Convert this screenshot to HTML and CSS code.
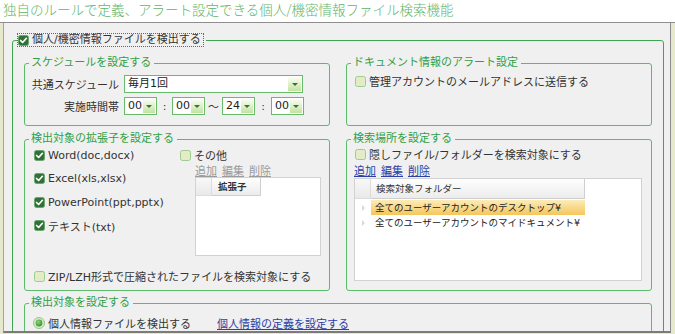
FILE: index.html
```html
<!DOCTYPE html>
<html lang="ja">
<head>
<meta charset="utf-8">
<title>個人/機密情報ファイル検索機能</title>
<link rel="stylesheet" href="styles.css">
</head>
<body>
<div class="title">独自のルールで定義、アラート設定できる個人/機密情報ファイル検索機能</div>
<div class="window">
  <div class="pane">
    <fieldset class="outer">
      <legend class="outer-legend"><span class="focus"><svg class="cb" width="11" height="11" viewBox="0 0 11 11"><rect x="0.5" y="0.5" width="10" height="10" rx="2" fill="#2f7137" stroke="#6aa66d"/><path d="M2.6 5.5 L4.6 7.5 L8.4 3.3" fill="none" stroke="#fff" stroke-width="1.7" stroke-linecap="round" stroke-linejoin="round"/></svg><span>個人/機密情報ファイルを検出する</span></span></legend>
      <div class="outer-body">
        <div class="grid">
          <fieldset class="group sched">
            <legend>スケジュールを設定する</legend>
            <div class="gbody">
              <div class="frow">
                <span class="flabel">共通スケジュール</span>
                <span class="select w-wide"><span class="sval">毎月1回</span><span class="sbtn"><i class="tri"></i></span></span>
              </div>
              <div class="frow">
                <span class="flabel">実施時間帯</span>
                <span class="select w-s"><span class="sval">00</span><span class="sbtn"><i class="tri"></i></span></span>
                <span class="sep">:</span>
                <span class="select w-s"><span class="sval">00</span><span class="sbtn"><i class="tri"></i></span></span>
                <span class="sep wave">〜</span>
                <span class="select w-s"><span class="sval">24</span><span class="sbtn"><i class="tri"></i></span></span>
                <span class="sep c2">:</span>
                <span class="select w-s"><span class="sval">00</span><span class="sbtn"><i class="tri"></i></span></span>
              </div>
            </div>
          </fieldset>

          <fieldset class="group alert">
            <legend>ドキュメント情報のアラート設定</legend>
            <div class="gbody">
              <label class="check"><svg class="cb" width="11" height="11" viewBox="0 0 11 11"><rect x="0.5" y="0.5" width="10" height="10" rx="2" fill="#e3ecc6" stroke="#9ccc8f"/></svg><span>管理アカウントのメールアドレスに送信する</span></label>
            </div>
          </fieldset>

          <fieldset class="group ext">
            <legend>検出対象の拡張子を設定する</legend>
            <div class="gbody">
              <div class="ext-cols">
                <div class="ext-list">
                  <label class="check"><svg class="cb" width="11" height="11" viewBox="0 0 11 11"><rect x="0.5" y="0.5" width="10" height="10" rx="2" fill="#2f7137" stroke="#6aa66d"/><path d="M2.6 5.5 L4.6 7.5 L8.4 3.3" fill="none" stroke="#fff" stroke-width="1.7" stroke-linecap="round" stroke-linejoin="round"/></svg><span>Word(doc,docx)</span></label>
                  <label class="check"><svg class="cb" width="11" height="11" viewBox="0 0 11 11"><rect x="0.5" y="0.5" width="10" height="10" rx="2" fill="#2f7137" stroke="#6aa66d"/><path d="M2.6 5.5 L4.6 7.5 L8.4 3.3" fill="none" stroke="#fff" stroke-width="1.7" stroke-linecap="round" stroke-linejoin="round"/></svg><span>Excel(xls,xlsx)</span></label>
                  <label class="check"><svg class="cb" width="11" height="11" viewBox="0 0 11 11"><rect x="0.5" y="0.5" width="10" height="10" rx="2" fill="#2f7137" stroke="#6aa66d"/><path d="M2.6 5.5 L4.6 7.5 L8.4 3.3" fill="none" stroke="#fff" stroke-width="1.7" stroke-linecap="round" stroke-linejoin="round"/></svg><span>PowerPoint(ppt,pptx)</span></label>
                  <label class="check"><svg class="cb" width="11" height="11" viewBox="0 0 11 11"><rect x="0.5" y="0.5" width="10" height="10" rx="2" fill="#2f7137" stroke="#6aa66d"/><path d="M2.6 5.5 L4.6 7.5 L8.4 3.3" fill="none" stroke="#fff" stroke-width="1.7" stroke-linecap="round" stroke-linejoin="round"/></svg><span>テキスト(txt)</span></label>
                </div>
                <div class="ext-other">
                  <label class="check"><svg class="cb" width="11" height="11" viewBox="0 0 11 11"><rect x="0.5" y="0.5" width="10" height="10" rx="2" fill="#e3ecc6" stroke="#9ccc8f"/></svg><span>その他</span></label>
                  <div class="links disabled ext-links"><a>追加</a><a>編集</a><a>削除</a></div>
                  <div class="table ext-table">
                    <div class="thead"><span class="th-blank"></span><span class="th">拡張子</span></div>
                  </div>
                </div>
              </div>
              <label class="check zip"><svg class="cb" width="11" height="11" viewBox="0 0 11 11"><rect x="0.5" y="0.5" width="10" height="10" rx="2" fill="#e3ecc6" stroke="#9ccc8f"/></svg><span>ZIP/LZH形式で圧縮されたファイルを検索対象にする</span></label>
            </div>
          </fieldset>

          <fieldset class="group loc">
            <legend>検索場所を設定する</legend>
            <div class="gbody">
              <label class="check"><svg class="cb" width="11" height="11" viewBox="0 0 11 11"><rect x="0.5" y="0.5" width="10" height="10" rx="2" fill="#e3ecc6" stroke="#9ccc8f"/></svg><span>隠しファイル/フォルダーを検索対象にする</span></label>
              <div class="links loc-links"><a href="#">追加</a><a href="#">編集</a><a href="#">削除</a></div>
              <div class="table loc-table">
                <div class="thead"><span class="th-blank"></span><span class="th">検索対象フォルダー</span></div>
                <div class="tbody">
                  <div class="trow sel"><span class="tblank"><i class="mini"></i></span><span class="tcell">全てのユーザーアカウントのデスクトップ¥</span></div>
                  <div class="trow"><span class="tblank"><i class="mini"></i></span><span class="tcell">全てのユーザーアカウントのマイドキュメント¥</span></div>
                </div>
              </div>
            </div>
          </fieldset>

          <fieldset class="group detect">
            <legend>検出対象を設定する</legend>
            <div class="gbody">
              <div class="radio-row">
                <svg class="rb" width="12" height="12" viewBox="0 0 12 12"><defs><radialGradient id="rg" cx="0.4" cy="0.35" r="0.7"><stop offset="0" stop-color="#8fd67a"/><stop offset="1" stop-color="#2e8f35"/></radialGradient></defs><circle cx="6" cy="6" r="5.5" fill="#dcebc8" stroke="#93c58c"/><circle cx="6" cy="6" r="3.4" fill="url(#rg)"/></svg>
                <span>個人情報ファイルを検出する</span>
                <a class="deflink" href="#">個人情報の定義を設定する</a>
              </div>
            </div>
          </fieldset>
        </div>
      </div>
    </fieldset>
  </div>
</div>
</body>
</html>
```

FILE: styles.css
```css
* { box-sizing: border-box; }
html, body { margin: 0; padding: 0; }
body {
  width: 675px;
  height: 334px;
  overflow: hidden;
  background: #fff;
  font-family: "DejaVu Sans", "Noto Sans CJK JP", sans-serif;
  font-size: 11px;
  color: #333;
}
.title {
  height: 22px;
  padding-left: 3px;
  font-family: "Noto Sans CJK JP", sans-serif;
  font-size: 13.5px;
  font-weight: 300;
  line-height: 18px;
  color: #62b463;
  white-space: nowrap;
}
.window {
  height: 312px;
  border-top: 1px solid #8e8e8e;
  background: #e6e9cc;
  padding: 0 4px 0 3px;
}
.pane {
  height: 310px;
  background: #f0f0f0;
  border-left: 1px solid #a3a88a;
  border-right: 1px solid #8c8c8c;
  border-bottom: 2px solid #7b7b7b;
  padding: 10px 6px 0 8px;
  overflow: hidden;
}
fieldset {
  margin: 0;
  padding: 0;
  min-width: 0;
  border: 1px solid #5bbb6b;
  border-radius: 3px;
}
legend { padding: 0; }
.outer { border-color: #3fa653; height: 320px; }
.outer-legend { margin-left: 4px; padding-right: 2px; }
.focus {
  display: flex;
  align-items: center;
  height: 14px;
  border: 1px dotted #666;
  padding: 0 2px 0 0;
  gap: 3px;
  line-height: 12px;
  color: #333;
}
.outer-body { padding: 9px 11px 0 11px; }
.grid {
  display: grid;
  grid-template-columns: 306px 306px;
  column-gap: 16px;
  row-gap: 6px;
}
.group legend {
  margin-left: 4px;
  padding: 0 3px 0 2px;
  line-height: 14px;
  color: #2f9f45;
}
.sched, .alert { height: 70px; }
.ext, .loc { height: 159px; }
.detect { grid-column: 1 / 3; height: 60px; margin-top: -1px; }

/* schedule */
.sched .gbody { padding: 5px 0 0 5px; }
.frow { display: flex; align-items: center; height: 18px; }
.frow + .frow { margin-top: 4px; }
.flabel { width: 89px; margin-right: 5px; text-align: right; white-space: nowrap; }
.select {
  display: flex;
  align-items: stretch;
  height: 18px;
  border: 1px solid #66bc6a;
  background: #fff;
}
.w-wide { width: 179px; }
.w-s { width: 33px; }
.sval { flex: 1; padding-left: 3px; line-height: 16px; color: #222; white-space: nowrap; }
.sbtn {
  width: 13px;
  margin: 1px;
  background: linear-gradient(#fbfdf7, #c4e2a0);
  display: flex;
  align-items: center;
  justify-content: center;
}
.tri {
  width: 0;
  height: 0;
  border-left: 3px solid transparent;
  border-right: 3px solid transparent;
  border-top: 3px solid #2a7a2e;
}
.sep { width: 15px; text-align: center; }
.sep.wave { width: 17px; font-family: "Noto Sans CJK JP", sans-serif; }
.sep.c2 { width: 16px; }

/* checks */
.check { display: flex; align-items: center; height: 14px; gap: 3px; white-space: nowrap; }
.cb { flex: none; display: block; }

.alert .gbody { padding: 4px 0 0 8px; }

/* extensions */
.ext .gbody { padding: 2px 0 0 9px; }
.ext-cols { display: flex; }
.ext-list { width: 146px; display: flex; flex-direction: column; gap: 9.5px; }
.ext-other { display: flex; flex-direction: column; }
.links { display: flex; gap: 5px; height: 14px; line-height: 14px; font-family: "Noto Sans CJK JP", sans-serif; }
.links a { color: #2b3fa6; text-decoration: underline; }
.links.disabled a { color: #9b9b9b; }
.ext-links { margin: 1px 0 0 15px; }
.ext-table { margin-left: 15px; width: 126px; height: 79px; }
.zip { margin-top: 13px; }

/* tables */
.table { background: #fff; border: 1px solid #d2d2d2; }
.thead { display: flex; height: 20px; }
.th-blank {
  width: 16px;
  background: linear-gradient(#f8f8f8, #e9e9e9);
  border-right: 1px solid #dcdcdc;
  border-bottom: 1px solid #dcdcdc;
}
.th {
  background: linear-gradient(#fefefe, #ececec);
  border-right: 1px solid #cfcfcf;
  border-bottom: 1px solid #cfcfcf;
  font-family: "Noto Sans CJK JP", sans-serif;
  font-size: 9.5px;
  line-height: 19px;
  padding-left: 5px;
  color: #333;
}
.ext-table .thead { height: 18px; }
.ext-table .th { width: 49px; font-weight: bold; line-height: 17px; padding-left: 6px; }

/* location */
.loc .gbody { padding: 1px 8px 0 7px; }
.loc .check { margin-left: 1px; }
.loc-links { margin-top: 2px; }
.loc-table { margin-top: 1px; width: 288px; height: 103px; }
.loc-table .th { width: 214px; }
.tbody { padding-top: 1px; }
.trow { display: flex; height: 15px; }
.tblank { width: 16px; display: flex; align-items: center; justify-content: center; }
.mini {
  width: 0;
  height: 0;
  border-top: 3px solid transparent;
  border-bottom: 3px solid transparent;
  border-left: 3px solid #dadada;
}
.tcell {
  width: 214px;
  padding-left: 4px;
  font-size: 9.5px;
  line-height: 15px;
  color: #222;
  white-space: nowrap;
}
.trow.sel .tcell { background: linear-gradient(#fdecb9, #f4c65c); }

/* detection */
.detect .gbody { padding: 6px 0 0 8px; }
.radio-row { display: flex; align-items: center; height: 14px; white-space: nowrap; }
.rb { flex: none; display: block; margin-right: 3px; }
.deflink { margin-left: 26px; color: #2b3fa6; text-decoration: underline; }
```
